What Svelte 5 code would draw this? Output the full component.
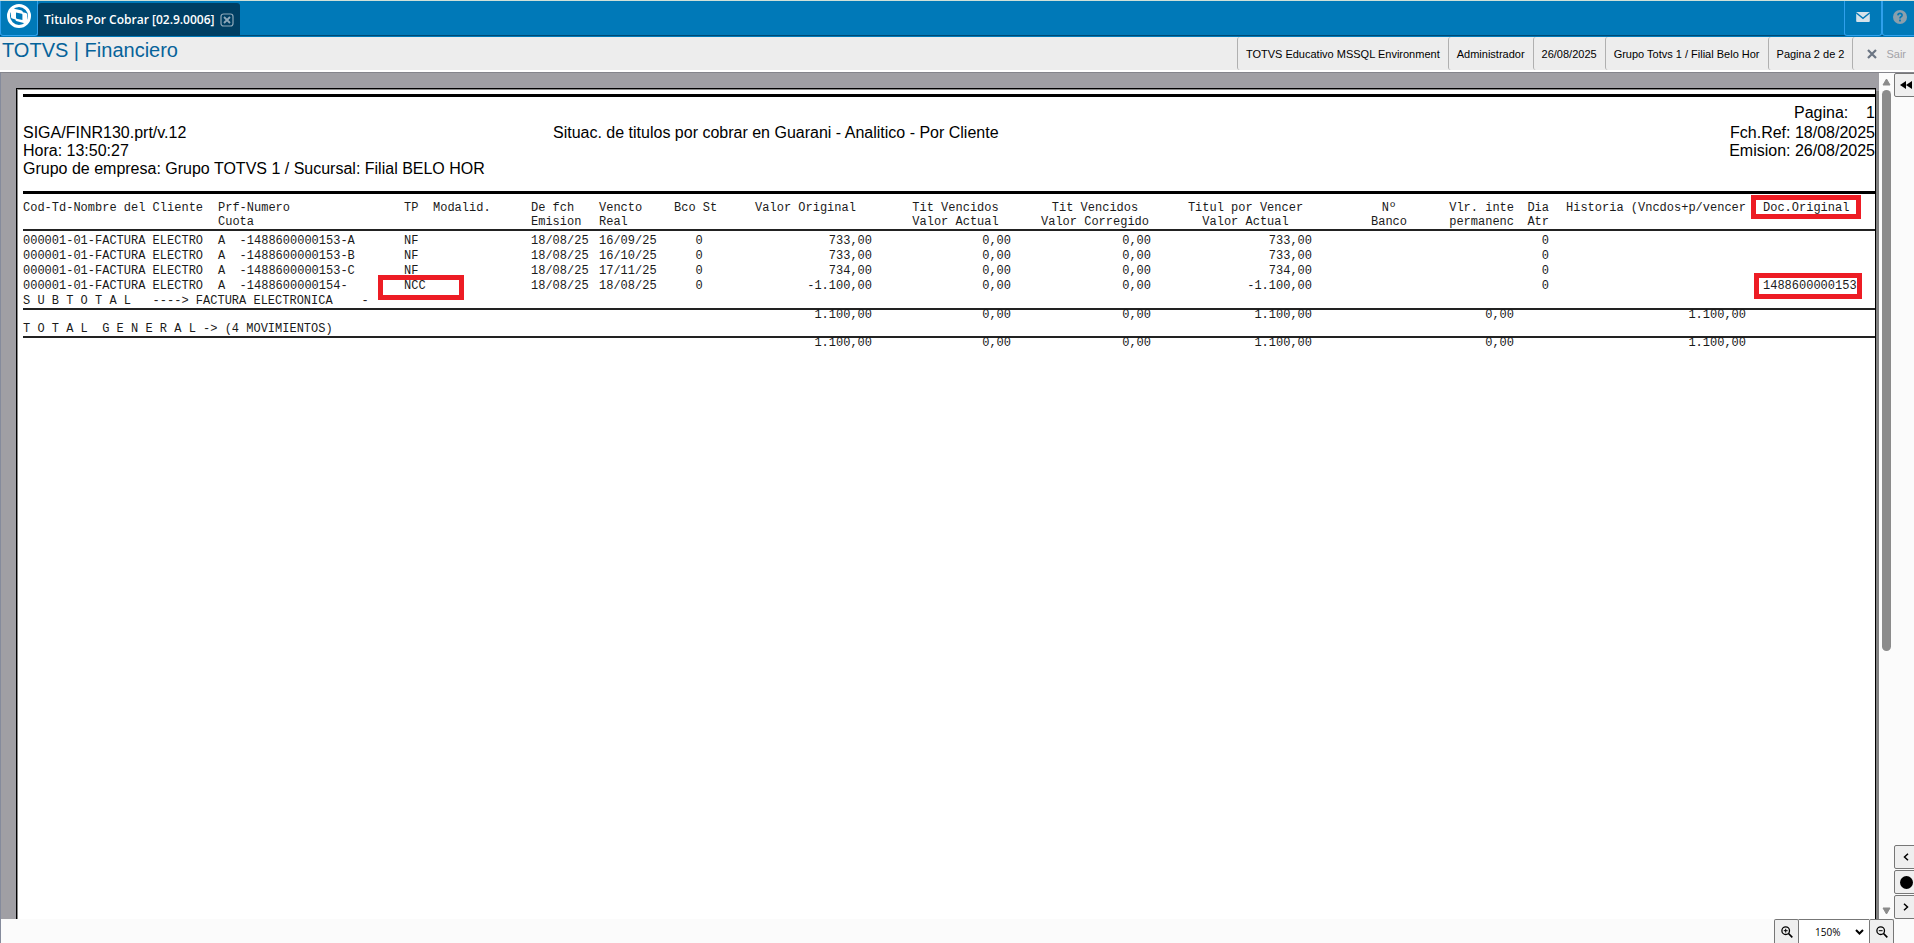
<script>
  const columns = [
    { w: 195, head: ['Cod-Td-Nombre del Cliente', ''] },
    { w: 186, head: ['Prf-Numero', 'Cuota'] },
    { w: 29, head: ['TP', ''] },
    { w: 98, head: ['Modalid.', ''] },
    { w: 68, head: ['De fch', 'Emision'] },
    { w: 75, head: ['Vencto', 'Real'] },
    { w: 65, head: ['Bco St', ''] },
    { w: 133, head: ['Valor Original', ''], kind: 'num' },
    { w: 139, head: ['Tit Vencidos', 'Valor Actual'], kind: 'num indent' },
    { w: 140, head: ['Tit Vencidos', 'Valor Corregido'], kind: 'num indent' },
    { w: 161, head: ['Titul por Vencer', 'Valor Actual'], kind: 'num indent' },
    { w: 126, head: ['Nº', 'Banco'], kind: 'num indent' },
    { w: 76, head: ['Vlr. inte', 'permanenc'], kind: 'num end' },
    { w: 35, head: ['Dia', 'Atr'], kind: 'num end' },
    { w: 79, head: ['Historia', ''], kind: 'gutter' },
    { w: 118, head: ['(Vncdos+p/vencer', ''], kind: 'num end' },
    { w: 129, head: ['Doc.Original', ''], kind: 'gutter', mark: true }
  ];

  const title = (suffix, tp, due, value, doc = '') => [
    '000001-01-FACTURA ELECTRO', 'A  -1488600000' + suffix, tp, '', '18/08/25', due, '   0',
    value, '0,00', '0,00', value, '', '', '0', '', '', doc
  ];
  const rows = [
    title('153-A', 'NF', '16/09/25', '733,00'),
    title('153-B', 'NF', '16/10/25', '733,00'),
    title('153-C', 'NF', '17/11/25', '734,00'),
    title('154-', 'NCC', '18/08/25', '-1.100,00', '1488600000153')
  ];
  const totals = ['', '', '', '', '', '', '', '1.100,00', '0,00', '0,00', '1.100,00', '', '0,00', '', '', '1.100,00', ''];
  const groups = [
    'S U B T O T A L   ----> FACTURA ELECTRONICA    -',
    'T O T A L  G E N E R A L -> (4 MOVIMIENTOS)'
  ];
  const info = ['TOTVS Educativo MSSQL Environment', 'Administrador', '26/08/2025', 'Grupo Totvs 1 / Filial Belo Hor', 'Pagina 2 de 2'];

  let zoom = $state('150%');
</script>

<div class="app">
  <header class="topbar">
    <button class="home" aria-label="Inicio">
      <svg width="24" height="24" viewBox="0 0 24 24">
        <circle cx="12" cy="12" r="10.5" fill="none" stroke="#fff" stroke-width="3" />
        <path fill="#fff" fill-rule="evenodd" d="M4 5.8Q4 4.2 5.6 4.6L14 6.2Q15.8 6.6 15.9 8.2L19 9Q20.3 9.4 20.3 11V18.2Q20.3 19.8 18.7 19.5L10 17.3Q8.5 17 8.4 15.5L5.2 14.6Q4 14.2 4 12.8ZM9 8.6V13.8Q9 14.5 9.7 14.7L15.4 16.1V10.7Q15.4 10 14.7 9.8Z" />
      </svg>
    </button>
    <div class="tab">
      <span>Titulos Por Cobrar [02.9.0006]</span>
      <button class="close" aria-label="Cerrar">
        <svg width="14" height="14" viewBox="0 0 14 14" fill="none" stroke="#8fa9ba">
          <rect x="1" y="1" width="12" height="12" rx="2.5" stroke-width="1.2" />
          <path d="M4 4 10 10M10 4 4 10" stroke-width="1.8" />
        </svg>
      </button>
    </div>
    <span class="spacer"></span>
    <button class="tool" aria-label="Mensajes">
      <svg width="14" height="10" viewBox="0 0 15 11">
        <rect width="15" height="11" rx="1" fill="#d6e2ea" />
        <path d="M0 .8 7.5 7 15 .8" fill="none" stroke="#0079b8" stroke-width="1.4" />
      </svg>
    </button>
    <button class="tool" aria-label="Ayuda">
      <svg width="14" height="14" viewBox="0 0 14 14">
        <circle cx="7" cy="7" r="7" fill="#8b9fac" />
        <path d="M4.9 5.4Q5 3.4 7 3.4T9.1 5.2Q9.1 6.2 8 6.8T7 8.5" fill="none" stroke="#0079b8" stroke-width="1.6" />
        <rect x="6.1" y="9.6" width="1.8" height="1.8" fill="#0079b8" />
      </svg>
    </button>
  </header>

  <div class="status">
    <h1>TOTVS | Financiero</h1>
    <span class="spacer"></span>
    {#each info as item}
      <span class="cell">{item}</span>
    {/each}
    <button class="cell exit">
      <svg width="10" height="10" viewBox="0 0 10 10"><path d="M1 1 9 9M9 1 1 9" stroke="#6b7583" stroke-width="2.2" /></svg>
      Sair
    </button>
  </div>

  <div class="body">
    <main class="view">
      <article class="paper">
        <section class="heading">
          <div class="left">SIGA/FINR130.prt/v.12<br />Hora: 13:50:27<br />Grupo de empresa: Grupo TOTVS 1 / Sucursal: Filial BELO HOR</div>
          <div class="center">Situac. de titulos por cobrar en Guarani - Analitico - Por Cliente</div>
          <div class="right">
            <div class="folio">Pagina:{'    '}1</div>
            Fch.Ref: 18/08/2025<br />Emision: 26/08/2025
          </div>
        </section>

        <table>
          <colgroup>
            {#each columns as c}<col style:width="{c.w}px" />{/each}
          </colgroup>
          <thead>
            <tr>
              {#each columns as c}
                <th class={c.kind}>{c.head[0]}<br />{c.head[1]}{#if c.mark}<i class="mark mark-head"></i>{/if}</th>
              {/each}
            </tr>
          </thead>
          <tbody>
            {#each rows as row}
              <tr>
                {#each row as value, i}
                  <td class={columns[i].kind}>{value}{#if value === 'NCC'}<i class="mark mark-type"></i>{:else if i === 16 && value}<i class="mark mark-doc"></i>{/if}</td>
                {/each}
              </tr>
            {/each}
          </tbody>
          {#each groups as label}
            <tbody class="group">
              <tr class="label"><td colspan="17">{label}</td></tr>
              <tr class="totals">
                {#each totals as value, i}<td class={columns[i].kind}>{value}</td>{/each}
              </tr>
            </tbody>
          {/each}
        </table>
      </article>
    </main>

    <div class="scrollbar">
      <svg width="9" height="8" viewBox="0 0 9 8"><path d="M4.5 1 8 7H1Z" fill="#8b8b8b" stroke="#8b8b8b" stroke-linejoin="round" /></svg>
      <div class="track"><div class="thumb"></div></div>
      <svg width="9" height="8" viewBox="0 0 9 8"><path d="M4.5 7 8 1H1Z" fill="#8b8b8b" stroke="#8b8b8b" stroke-linejoin="round" /></svg>
    </div>

    <nav class="side">
      <button aria-label="Mostrar panel">
        <svg width="12" height="8" viewBox="0 0 12 8"><path d="M6 0V8L0 4ZM12 0V8L6 4Z" /></svg>
      </button>
      <span class="spacer"></span>
      <button aria-label="Pagina anterior">
        <svg width="6" height="8" viewBox="0 0 6 8"><path d="M5 .8 1.5 4 5 7.2" fill="none" stroke="#000" stroke-width="1.5" /></svg>
      </button>
      <button aria-label="Ir a pagina">
        <svg width="13" height="13" viewBox="0 0 13 13"><circle cx="6.5" cy="6.5" r="6.5" /></svg>
      </button>
      <button aria-label="Pagina siguiente">
        <svg width="6" height="8" viewBox="0 0 6 8"><path d="M1 .8 4.5 4 1 7.2" fill="none" stroke="#000" stroke-width="1.5" /></svg>
      </button>
    </nav>
  </div>

  <footer class="zoombar">
    <button aria-label="Acercar">
      <svg width="12" height="12" viewBox="0 0 12 12" fill="none" stroke="#000">
        <circle cx="4.7" cy="4.7" r="3.8" stroke-width="1.3" />
        <path d="M7.5 7.5 11.3 11.3" stroke-width="1.7" />
        <path d="M2.8 4.7H6.6M4.7 2.8V6.6" />
      </svg>
    </button>
    <div class="select">
      <select aria-label="Zoom" bind:value={zoom}>
        <option>100%</option>
        <option>150%</option>
        <option>200%</option>
      </select>
      <svg width="9" height="6" viewBox="0 0 9 6"><path d="M1 1 4.5 4.5 8 1" fill="none" stroke="#000" stroke-width="2" /></svg>
    </div>
    <button aria-label="Alejar">
      <svg width="12" height="12" viewBox="0 0 12 12" fill="none" stroke="#000">
        <circle cx="4.7" cy="4.7" r="3.8" stroke-width="1.3" />
        <path d="M7.5 7.5 11.3 11.3" stroke-width="1.7" />
        <path d="M2.8 4.7H6.6" />
      </svg>
    </button>
  </footer>
</div>

<style>
  :global(body) { margin: 0; }

  .app {
    box-sizing: border-box;
    display: flex;
    flex-direction: column;
    height: 100vh;
    overflow: hidden;
    border-top: 1px solid #cfe0d8;
    background: #fbfbfb;
    color: #000;
    font-family: "Liberation Sans", Arial, sans-serif;
    font-size: 11px;
  }
  button {
    display: flex;
    align-items: center;
    justify-content: center;
    box-sizing: border-box;
    margin: 0;
    padding: 0;
    border: 0;
    background: none;
    color: inherit;
    font: inherit;
  }
  svg { flex: none; }
  .spacer { flex: 1; }

  .topbar {
    display: flex;
    flex: none;
    height: 36px;
    box-sizing: border-box;
    border-bottom: 1px solid #0079b8;
    background: #0079b8;
    box-shadow: inset 0 -1px #004a75;
  }
  .home {
    width: 38px;
    padding-bottom: 4px;
    border: 1px solid #2fa0ec;
    border-top: 0;
    border-radius: 0 0 3px 3px;
  }
  .tab {
    display: flex;
    align-items: center;
    gap: 6px;
    margin-top: 2px;
    padding: 0 6px;
    border-radius: 3px 3px 0 0;
    background: #003f63;
    color: #fff;
    font: 600 12px "Open Sans", sans-serif;
  }
  .tool {
    width: 38px;
    padding-bottom: 2px;
    border: 1px solid #2fa0ec;
    border-top: 0;
    border-radius: 0 0 3px 3px;
  }
  .tool:last-child { width: 39px; margin-right: -7px; padding-right: 3px; }

  .status {
    display: flex;
    flex: none;
    height: 33px;
    padding-bottom: 2px;
    background: #ededed linear-gradient(#fff, #fff) bottom / 100% 2px no-repeat;
  }
  h1 {
    margin: 0 0 0 2px;
    color: #06639a;
    font-size: 20px;
    font-weight: 400;
    line-height: 26px;
  }
  .cell {
    display: flex;
    align-items: center;
    padding: 0 8px;
    border-left: 1px solid #b0b0b0;
    border-radius: 3px;
  }
  .exit { gap: 9px; padding-left: 14px; color: #a3a3a8; }

  .body { display: flex; flex: 1; min-height: 0; border-top: 1px solid #85858c; }
  .view {
    display: flex;
    flex: 1;
    min-width: 0;
    padding: 15px 3px 0 15px;
    overflow: hidden;
    border-left: 1px solid #858b9c;
    background: #a09fa4;
  }
  .paper {
    flex: 1;
    min-width: 0;
    padding: 5px 0 0 6px;
    border: 1px solid #000;
    border-bottom: 0;
    background: #fff;
    box-shadow: inset 1px 1px #8a8a8a, 3px 3px #808080;
  }
  .heading {
    display: grid;
    grid-template-columns: 530fr 1100fr 222fr;
    padding: 7px 0 13px;
    border-top: 3px solid #000;
    font-size: 16px;
    line-height: 18px;
    white-space: nowrap;
  }
  .left, .center { padding-top: 20px; }
  .right { text-align: right; }
  .folio { padding-bottom: 2px; white-space: pre; }

  table {
    width: 100%;
    border-top: 3px solid #000;
    border-collapse: separate;
    border-spacing: 0;
    table-layout: fixed;
    color: #1a1a1a;
    font: 12px "Liberation Mono", "Courier New", monospace;
    line-height: 15px;
    white-space: pre;
  }
  th, td { position: relative; padding: 0; text-align: left; vertical-align: top; font-weight: 400; }
  th { padding-top: 7px; border-bottom: 2px solid #222; line-height: 14px; }
  th.num { text-align: center; }
  th.end, td.num { text-align: right; }
  th.indent { padding-left: 28px; }
  .gutter { padding-left: 17px; }
  tbody:nth-of-type(1) tr:first-child td { padding-top: 3px; }
  .label td { border-bottom: 2px solid #222; line-height: 14px; }
  .totals td { padding-bottom: 1px; line-height: 11px; }

  .mark { position: absolute; box-sizing: border-box; border: 5px solid #ed1c24; }
  .mark-head { top: 1px; left: 5px; width: 110px; height: 24px; }
  .mark-doc { top: -6px; left: 8px; width: 108px; height: 26px; }
  .mark-type { top: -4px; left: -26px; width: 86px; height: 25px; }

  .scrollbar {
    display: flex;
    flex-direction: column;
    align-items: center;
    gap: 4px;
    width: 15px;
    box-sizing: border-box;
    padding: 5px 0 4px;
  }
  .track { flex: 1; }
  .thumb { width: 9px; height: 69%; border-radius: 5px; background: #8b8b8b; }

  .side { display: flex; flex-direction: column; gap: 1px; width: 20px; overflow: hidden; }
  .side button {
    flex: none;
    width: 24px;
    height: 24px;
    border: 1px solid #777;
    border-radius: 2px;
    background: #efefef;
  }

  .zoombar {
    display: flex;
    flex: none;
    justify-content: flex-end;
    height: 24px;
    padding-right: 20px;
    border-left: 1px solid #858b9c;
  }
  .zoombar button { width: 25px; border: 1px solid #777; border-bottom: 0; border-radius: 2px 2px 0 0; background: #efefef; }
  .select { display: flex; align-items: center; width: 70px; box-sizing: border-box; padding-right: 5px; border-top: 1px solid #777; background: #fff; }
  select {
    flex: 1;
    min-width: 0;
    height: 100%;
    padding: 0 0 0 16px;
    border: 0;
    appearance: none;
    background: none;
    color: #000;
    font: 10px "Open Sans", sans-serif;
  }
</style>
